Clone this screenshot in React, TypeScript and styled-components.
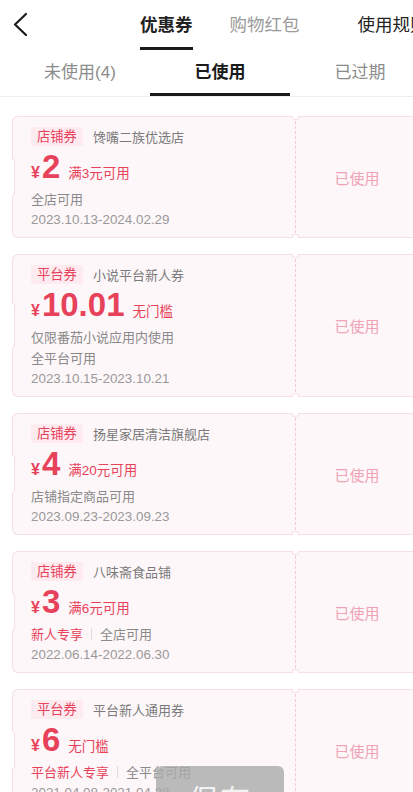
import React from "react";
import styled, { createGlobalStyle } from "styled-components";

const GlobalStyle = createGlobalStyle`
  html, body {
    margin: 0;
    padding: 0;
    background: #fff;
    overflow: hidden;
  }
  body {
    font-family: "Liberation Sans", "Noto Sans CJK SC", sans-serif;
    -webkit-font-smoothing: antialiased;
  }
`;

const ticketBorder = "#f8dfe5";
const ticketFill = "#fdf7f9";
const red = "#e8425b";

type Coupon = {
  kind: string;
  name: string;
  amount: string;
  condition: string;
  lines: { highlight?: string; text: string }[];
  date: string;
};

const coupons: Coupon[] = [
  {
    kind: "店铺券",
    name: "馋嘴二族优选店",
    amount: "2",
    condition: "满3元可用",
    lines: [{ text: "全店可用" }],
    date: "2023.10.13-2024.02.29",
  },
  {
    kind: "平台券",
    name: "小说平台新人券",
    amount: "10.01",
    condition: "无门槛",
    lines: [{ text: "仅限番茄小说应用内使用" }, { text: "全平台可用" }],
    date: "2023.10.15-2023.10.21",
  },
  {
    kind: "店铺券",
    name: "扬星家居清洁旗舰店",
    amount: "4",
    condition: "满20元可用",
    lines: [{ text: "店铺指定商品可用" }],
    date: "2023.09.23-2023.09.23",
  },
  {
    kind: "店铺券",
    name: "八味斋食品铺",
    amount: "3",
    condition: "满6元可用",
    lines: [{ highlight: "新人专享", text: "全店可用" }],
    date: "2022.06.14-2022.06.30",
  },
  {
    kind: "平台券",
    name: "平台新人通用券",
    amount: "6",
    condition: "无门槛",
    lines: [{ highlight: "平台新人专享", text: "全平台可用" }],
    date: "2021.04.08-2021.04.28",
  },
];

const Page = styled.div`
  width: 413px;
  height: 792px;
  overflow: hidden;
  position: relative;
`;

const Header = styled.div`
  height: 50px;
  display: flex;
  align-items: flex-start;
`;

const BackButton = styled.div`
  width: 14px;
  height: 24px;
  margin: 12px 0 0 13px;
  flex-shrink: 0;
`;

const TopTab = styled.div<{ $gap: number; $active?: boolean; $dim?: boolean }>`
  margin-left: ${(p) => p.$gap}px;
  display: flex;
  flex-direction: column;
  flex-shrink: 0;
  font-size: 17.5px;
  font-weight: ${(p) => (p.$active ? 600 : 400)};
  color: ${(p) => (p.$dim ? "#9a9a9a" : "#222")};
  white-space: nowrap;
`;

const TopLabel = styled.div`
  line-height: 22px;
  margin-top: 14px;
`;

const TopUnderline = styled.div<{ $show?: boolean }>`
  height: 2.5px;
  margin-top: 11px;
  background: ${(p) => (p.$show ? "#1a1a1a" : "transparent")};
`;

const SubTabs = styled.div`
  height: 46px;
  border-bottom: 1px solid #ececec;
  padding-left: 10px;
  display: flex;
`;

const SubTab = styled.div<{ $active?: boolean }>`
  width: 140px;
  flex-shrink: 0;
  display: flex;
  flex-direction: column;
  align-items: center;
  font-size: 17px;
  font-weight: ${(p) => (p.$active ? 600 : 400)};
  color: ${(p) => (p.$active ? "#1a1a1a" : "#8c8c8c")};
`;

const SubLabel = styled.div`
  line-height: 22px;
  margin-top: 12px;
`;

const SubUnderline = styled.div<{ $show?: boolean }>`
  align-self: stretch;
  height: 3px;
  margin-top: 9px;
  background: ${(p) => (p.$show ? "#1a1a1a" : "transparent")};
`;

const List = styled.div`
  padding: 19px 0 0 12px;
  display: flex;
  flex-direction: column;
  gap: 16px;
`;

const Ticket = styled.div`
  display: flex;
`;

const TicketMain = styled.div`
  position: relative;
  width: 284px;
  box-sizing: border-box;
  flex-shrink: 0;
  padding: 10px 0 7px 18px;
  background: ${ticketFill};
  border: 1px solid ${ticketBorder};
  border-right: 1px dashed #f5c9d3;
  border-radius: 6px 0 0 6px;

  &::before {
    content: "";
    position: absolute;
    left: -1px;
    top: 34%;
    bottom: 34%;
    width: 2px;
    background: #fff;
    border: 1px solid ${ticketBorder};
    border-left: none;
    border-radius: 0 3px 3px 0;
  }
`;

const TicketStub = styled.div`
  position: relative;
  width: 122px;
  flex-shrink: 0;
  display: flex;
  align-items: center;
  justify-content: center;
  background: ${ticketFill};
  border: 1px solid ${ticketBorder};
  border-left: none;
  border-radius: 0 6px 6px 0;
  font-size: 15px;
  color: #f0a3b5;

  &::before,
  &::after {
    content: "";
    position: absolute;
    left: -4px;
    width: 5px;
    height: 3px;
    background: #fff;
    border: 1px solid ${ticketBorder};
  }
  &::before {
    top: -1px;
    border-top: none;
    border-radius: 0 0 3px 3px;
  }
  &::after {
    bottom: -1px;
    border-bottom: none;
    border-radius: 3px 3px 0 0;
  }
`;

const TitleRow = styled.div`
  display: flex;
  align-items: center;
  height: 19px;
`;

const KindTag = styled.span`
  height: 19px;
  line-height: 19px;
  padding: 0 6px;
  border-radius: 2px;
  background: #fdebf0;
  color: ${red};
  font-size: 13.3px;
`;

const ShopName = styled.span`
  margin-left: 10px;
  font-size: 13px;
  color: #7a7a7a;
`;

const AmountRow = styled.div`
  display: flex;
  align-items: baseline;
  height: 37px;
  margin-top: 5px;
  color: ${red};
`;

const Yen = styled.span`
  font-size: 16px;
  font-weight: 600;
`;

const Amount = styled.span`
  margin-left: 2px;
  font-size: 33px;
  font-weight: 700;
  line-height: 32px;
`;

const Condition = styled.span`
  margin-left: 8px;
  font-size: 13.5px;
`;

const InfoLine = styled.div`
  display: flex;
  align-items: center;
  height: 21px;
  font-size: 13px;
  color: #8a8a8a;
  white-space: nowrap;
`;

const Highlight = styled.span`
  color: ${red};
`;

const Divider = styled.span`
  width: 1px;
  height: 12px;
  margin: 0 8px;
  background: #dedede;
`;

const DateLine = styled(InfoLine)`
  font-size: 13.4px;
  color: #999;
`;

const Toast = styled.div`
  position: absolute;
  left: 156px;
  top: 766px;
  width: 128px;
  height: 60px;
  border-radius: 6px;
  background: rgba(170, 170, 170, 0.8);
  color: #f2f2f2;
  font-size: 30px;
  display: flex;
  justify-content: center;
  padding-top: 10px;
  box-sizing: border-box;
  letter-spacing: 2px;
`;

function BackIcon() {
  return (
    <svg width="14" height="24" viewBox="0 0 14 24" fill="none">
      <path d="M13 2 L2 12.5 L13 23" stroke="#1a1a1a" strokeWidth="2.2" strokeLinecap="round" strokeLinejoin="round" />
    </svg>
  );
}

function CouponTicket({ coupon }: { coupon: Coupon }) {
  return (
    <Ticket>
      <TicketMain>
        <TitleRow>
          <KindTag>{coupon.kind}</KindTag>
          <ShopName>{coupon.name}</ShopName>
        </TitleRow>
        <AmountRow>
          <Yen>¥</Yen>
          <Amount>{coupon.amount}</Amount>
          <Condition>{coupon.condition}</Condition>
        </AmountRow>
        {coupon.lines.map((line, i) => (
          <InfoLine key={i}>
            {line.highlight && (
              <>
                <Highlight>{line.highlight}</Highlight>
                <Divider />
              </>
            )}
            {line.text}
          </InfoLine>
        ))}
        <DateLine>{coupon.date}</DateLine>
      </TicketMain>
      <TicketStub>已使用</TicketStub>
    </Ticket>
  );
}

export default function App() {
  return (
    <>
      <GlobalStyle />
      <Page>
        <Header>
          <BackButton>
            <BackIcon />
          </BackButton>
          <TopTab $gap={113} $active>
            <TopLabel>优惠券</TopLabel>
            <TopUnderline $show />
          </TopTab>
          <TopTab $gap={37} $dim>
            <TopLabel>购物红包</TopLabel>
            <TopUnderline />
          </TopTab>
          <TopTab $gap={58}>
            <TopLabel>使用规则</TopLabel>
            <TopUnderline />
          </TopTab>
        </Header>
        <SubTabs>
          <SubTab>
            <SubLabel>未使用(4)</SubLabel>
            <SubUnderline />
          </SubTab>
          <SubTab $active>
            <SubLabel>已使用</SubLabel>
            <SubUnderline $show />
          </SubTab>
          <SubTab>
            <SubLabel>已过期</SubLabel>
            <SubUnderline />
          </SubTab>
        </SubTabs>
        <List>
          {coupons.map((c, i) => (
            <CouponTicket key={i} coupon={c} />
          ))}
        </List>
        <Toast>保存</Toast>
      </Page>
    </>
  );
}
